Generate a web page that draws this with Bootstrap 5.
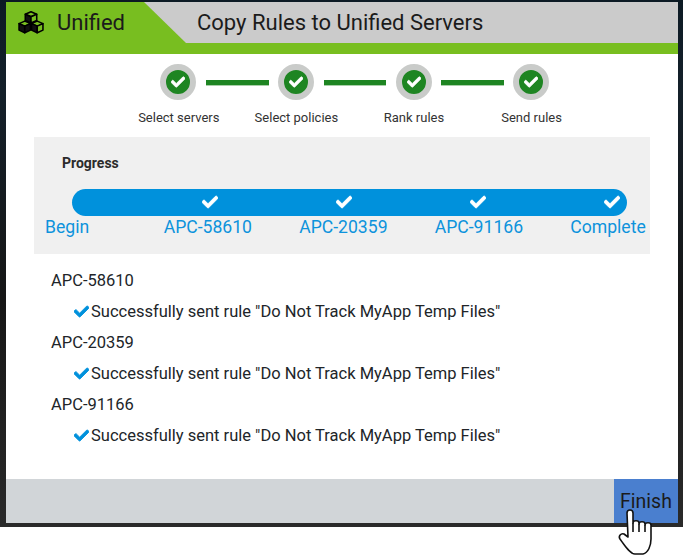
<!DOCTYPE html>
<html lang="en">
<head>
  <meta charset="UTF-8" />
  <meta name="viewport" content="width=device-width, initial-scale=1.0"/>
  <title>Copy Rules to Unified Servers</title>
  <link href="https://cdn.jsdelivr.net/npm/bootstrap@5.3.0/dist/css/bootstrap.min.css" rel="stylesheet">
  <style>
    body {
      background: #fff;
      font-family: Roboto, "Liberation Sans", sans-serif;
      color: #212529;
      overflow: hidden;
    }
    .backdrop {
      position: relative;
      height: 527px;
      padding: 2px 5px 4px 6px;
      background: linear-gradient(180deg, #0c1a24 0, #14202a 90px, #161616 300px, #2a2a2a 527px);
    }
    .dialog { height: 521px; background: #fff; }
    .head-bar { height: 52px; background: #78be20; }
    .brand { width: 138px; padding-left: 12px; padding-bottom: 12px; font-size: 22px; gap: 13px; color: #1b1b1b; }
    .title-bar {
      height: 41px;
      padding-left: 53px;
      font-size: 22px;
      color: #1b1b1b;
      background: #cbcbcb;
      clip-path: polygon(0 0, 100% 0, 100% 100%, 42px 100%);
    }
    .steps { margin-top: 10px; margin-left: 154px; }
    .step-dot {
      width: 36px;
      height: 36px;
      border-radius: 50%;
      background: #1e8522;
      border: 6px solid #c9cbc9;
    }
    .step-dot svg { width: 14px; height: 14px; fill: #fff; stroke: #fff; stroke-width: 30; }
    .step-line { width: 63px; height: 5px; margin: 0 9px 0 10px; background: #1e8522; box-shadow: 0 1px 0 #a9cfa9; }
    .step-line.mid { width: 62px; margin: 0 10px; }
    .step-line.last { margin: 0 9px; }
    .step-names { margin-top: 9px; margin-left: 114px; font-size: 13px; line-height: 18px; color: #333; }
    .step-names span { width: 117.6px; text-align: center; }
    .progress-box { margin: 10px 28px 0; height: 117px; background: #f0f0f0; }
    .progress-title { padding: 17px 0 0 28px; font-size: 14px; line-height: 18px; font-weight: 700; color: #2b2b2b; }
    .bar-fill {
      height: 27px;
      margin: 17px 23px 0 38px;
      padding-right: 7px;
      gap: 118px;
      border-radius: 14px;
      background: #0091dc;
    }
    .bar-fill svg { width: 16px; height: 16px; fill: #fff; stroke: #fff; stroke-width: 30; margin-bottom: 2px; }
    .bar-names { margin-left: 11px; font-size: 17.6px; line-height: 22px; color: #0d93dc; }
    .bar-names span { margin-right: 47.2px; white-space: nowrap; }
    .bar-names span:first-child { margin-right: 74.5px; }
    .send-log { padding: 16px 0 0 45px; font-size: 16.5px; line-height: 22px; }
    .log-server { height: 31px; }
    .log-line { height: 31px; padding-left: 23px; white-space: nowrap; }
    .log-line svg { width: 15px; height: 15px; fill: #0091dc; stroke: #0091dc; stroke-width: 30; margin-right: 2px; vertical-align: -2px; }
    .foot-bar { height: 44px; background: #d1d5d8; }
    .finish-btn {
      width: 64px;
      height: 44px;
      padding: 2px 0 0;
      border: 0;
      border-radius: 0;
      font-size: 19.5px;
      color: #1b1b1b;
      background: #4a7fcf;
    }
    .hand-cursor { position: absolute; left: 616px; top: 508px; width: 37px; height: 48px; }
  </style>
</head>
<body>
  <svg width="0" height="0" class="position-absolute">
    <symbol id="tick" viewBox="0 0 512 512">
      <path d="M173.9 439.4l-166.4-166.4c-10-10-10-26.2 0-36.2l36.2-36.2c10-10 26.2-10 36.2 0L192 312.7 432.1 72.6c10-10 26.2-10 36.2 0l36.2 36.2c10 10 10 26.2 0 36.2l-294.4 294.4c-10 10-26.2 10-36.2 0z"/>
    </symbol>
  </svg>

  <div class="backdrop">
    <div class="dialog d-flex flex-column">
      <!-- Header -->
      <div class="head-bar d-flex flex-shrink-0">
        <div class="brand d-flex align-items-center">
          <svg width="26" height="23" viewBox="0.5 0.3 25 22" stroke="#000" stroke-width="1.5" stroke-linejoin="round">
            <path fill="#78be20" d="M13 1l5.5 2.4L13 5.8 7.5 3.4z"/>
            <path fill="#111" d="M7.5 3.4L13 5.8v6L7.5 9.4z"/>
            <path fill="#78be20" d="M18.5 3.4v6L13 11.8v-6z"/>
            <path fill="#78be20" d="M7 10l5.5 2.4L7 14.8 1.5 12.4z"/>
            <path fill="#111" d="M1.5 12.4L7 14.8v6.4l-5.5-2.6z"/>
            <path fill="#111" d="M12.5 12.4v6.2L7 21.2v-6.4z"/>
            <path fill="#78be20" d="M19 10l5.5 2.4L19 14.8l-5.5-2.4z"/>
            <path fill="#111" d="M13.5 12.4L19 14.8v6.4l-5.5-2.6z"/>
            <path fill="#78be20" d="M24.5 12.4v6.2L19 21.2v-6.4z"/>
          </svg>
          <span>Unified</span>
        </div>
        <div class="title-bar flex-grow-1 d-flex align-items-center">Copy Rules to Unified Servers</div>
      </div>

      <!-- Wizard steps -->
      <div class="steps d-flex align-items-center">
        <div class="step-dot d-flex align-items-center justify-content-center"><svg><use href="#tick"/></svg></div>
        <div class="step-line"></div>
        <div class="step-dot d-flex align-items-center justify-content-center"><svg><use href="#tick"/></svg></div>
        <div class="step-line mid"></div>
        <div class="step-dot d-flex align-items-center justify-content-center"><svg><use href="#tick"/></svg></div>
        <div class="step-line last"></div>
        <div class="step-dot d-flex align-items-center justify-content-center"><svg><use href="#tick"/></svg></div>
      </div>
      <div class="step-names d-flex">
        <span>Select servers</span><span>Select policies</span><span>Rank rules</span><span>Send rules</span>
      </div>

      <!-- Progress -->
      <div class="progress-box">
        <div class="progress-title">Progress</div>
        <div class="bar-fill d-flex align-items-center justify-content-end">
          <svg><use href="#tick"/></svg><svg><use href="#tick"/></svg><svg><use href="#tick"/></svg><svg><use href="#tick"/></svg>
        </div>
        <div class="bar-names d-flex">
          <span>Begin</span><span>APC-58610</span><span>APC-20359</span><span>APC-91166</span><span>Complete</span>
        </div>
      </div>

      <!-- Results -->
      <div class="send-log flex-grow-1">
        <div class="log-server">APC-58610</div>
        <div class="log-line"><svg><use href="#tick"/></svg>Successfully sent rule "Do Not Track MyApp Temp Files"</div>
        <div class="log-server">APC-20359</div>
        <div class="log-line"><svg><use href="#tick"/></svg>Successfully sent rule "Do Not Track MyApp Temp Files"</div>
        <div class="log-server">APC-91166</div>
        <div class="log-line"><svg><use href="#tick"/></svg>Successfully sent rule "Do Not Track MyApp Temp Files"</div>
      </div>

      <!-- Footer -->
      <div class="foot-bar d-flex justify-content-end flex-shrink-0">
        <button type="button" class="btn finish-btn">Finish</button>
      </div>
    </div>
  </div>

  <svg class="hand-cursor" viewBox="0 0 37 48">
    <path fill="#fff" stroke="#111" stroke-width="1.6" stroke-linejoin="round" d="M11 5c0-4 6-4 6 0v10c0-3 6-3 6 0v1c0-3 6-3 6 0v1c0-3 6-3 6 0v14c0 7-3 14-8 15h-8c-5 0-10-8-15-15-2-3 1-6 4-5l4 3z"/>
    <path fill="none" stroke="#111" stroke-width="1.6" d="M17 15v9M23 16v8M29 17v7"/>
  </svg>
</body>
</html>
